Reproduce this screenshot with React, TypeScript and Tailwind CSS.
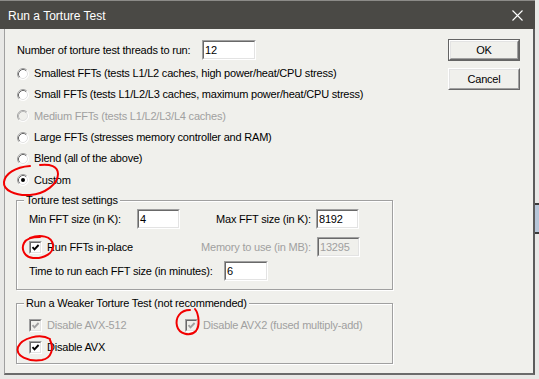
import type { ReactNode } from "react";

const BODY = "#f0f0ec";

function Radio({ checked, disabled }: { checked?: boolean; disabled?: boolean }) {
  return (
    <svg width="12" height="12" viewBox="0 0 12 12" className="shrink-0">
      <circle cx="6" cy="6" r="5.5" fill={disabled ? BODY : "#fff"} />
      <path d="M2.11 9.89 A5.5 5.5 0 0 1 9.89 2.11" stroke="#a0a0a0" fill="none" />
      <path d="M9.89 2.11 A5.5 5.5 0 0 1 2.11 9.89" stroke="#fff" fill="none" />
      <path d="M2.82 9.18 A4.5 4.5 0 0 1 9.18 2.82" stroke={disabled ? "#b8b8b8" : "#696969"} fill="none" />
      <path d="M9.18 2.82 A4.5 4.5 0 0 1 2.82 9.18" stroke="#e3e3e3" fill="none" />
      {checked && <circle cx="6" cy="6" r="2" fill="#000" />}
    </svg>
  );
}

function Check({ checked, disabled }: { checked?: boolean; disabled?: boolean }) {
  return (
    <span className="flex h-[13px] w-[13px] shrink-0 border border-t-[#a0a0a0] border-l-[#a0a0a0] border-b-white border-r-white">
      <span
        className={`flex h-full w-full items-center justify-center border border-t-[#696969] border-l-[#696969] border-b-[#e3e3e3] border-r-[#e3e3e3] ${
          disabled ? "bg-[#f0f0ec]" : "bg-white"
        }`}
      >
        {checked && (
          <svg width="9" height="9" viewBox="0 0 9 9">
            <path d="M1.5 4.2 L3.5 6.3 L7.6 2" stroke={disabled ? "#a0a0a0" : "#000"} strokeWidth="1.9" fill="none" />
          </svg>
        )}
      </span>
    </span>
  );
}

function Field({ value, disabled, className }: { value: string; disabled?: boolean; className: string }) {
  return (
    <div className={`flex h-[20px] shrink-0 border border-t-[#a0a0a0] border-l-[#a0a0a0] border-b-white border-r-white ${className}`}>
      <div
        className={`flex h-full w-full items-center border border-t-[#696969] border-l-[#696969] border-b-[#e3e3e3] border-r-[#e3e3e3] pl-[1px] ${
          disabled ? "bg-[#f0f0ec] text-[#a0a0a0]" : "bg-white text-black"
        }`}
      >
        {value}
      </div>
    </div>
  );
}

function Button({ label, primary }: { label: string; primary?: boolean }) {
  return (
    <div className={`h-[22px] w-[72px] ${primary ? "border border-[#646464]" : ""}`}>
      <div className="h-full w-full border border-t-white border-l-white border-b-[#696969] border-r-[#696969]">
        <div className="flex h-full w-full items-center justify-center border border-t-[#e3e3e3] border-l-[#e3e3e3] border-b-[#a0a0a0] border-r-[#a0a0a0]">
          {label}
        </div>
      </div>
    </div>
  );
}

function RadioRow({ label, h, checked, disabled }: { label: string; h: string; checked?: boolean; disabled?: boolean }) {
  return (
    <div className={`flex items-center ${h}`}>
      <Radio checked={checked} disabled={disabled} />
      <span className={`ml-[5px] ${disabled ? "text-[#a0a0a0]" : ""}`}>{label}</span>
    </div>
  );
}

function Group({ title, className, children }: { title: string; className: string; children: ReactNode }) {
  return (
    <fieldset className={`ml-[-1px] w-[377px] border border-[#a0a0a0] shadow-[inset_1px_1px_0_#fff,1px_1px_0_#fff] ${className}`}>
      <legend className="ml-[7px] bg-[#f0f0ec] px-[2px] leading-[14px]">{title}</legend>
      <div className="pl-[12px]">{children}</div>
    </fieldset>
  );
}

export default function App() {
  return (
    <div className="relative flex h-[379px] w-[539px] overflow-hidden bg-[#e8e8e6] font-['Liberation_Sans',Arial,sans-serif] text-[11px] leading-[13px] text-black">
      <div className="flex h-[375px] w-[535px] flex-col">
        <div className="flex h-[29px] items-center justify-between border-t border-[#8c8b88] bg-[#4a4945] pl-[8px] pr-[12px] text-[12px] text-white">
          <span className="pt-[2px]">Run a Torture Test</span>
          <svg width="11" height="11" viewBox="0 0 11 11">
            <path d="M0.5 0.5 L10.5 10.5 M10.5 0.5 L0.5 10.5" stroke="#fff" strokeWidth="1.1" />
          </svg>
        </div>
        <div className="ml-[4px] flex h-[346px] border-b-2 border-l border-r-2 border-b-[#6b6b6b] border-l-[#a0a0a0] border-r-[#5c5c5c] bg-[#f0f0ec] tracking-[-0.2px]">
          <div className="w-[443px] pl-[12px] pt-[11px]">
            <div className="flex h-[20px] items-center">
              <span className="w-[185px]">Number of torture test threads to run:</span>
              <Field value="12" className="w-[54px]" />
            </div>
            <div className="mt-[3px]">
              <RadioRow h="h-[21px]" label="Smallest FFTs (tests L1/L2 caches, high power/heat/CPU stress)" />
              <RadioRow h="h-[21px]" label="Small FFTs (tests L1/L2/L3 caches, maximum power/heat/CPU stress)" />
              <RadioRow h="h-[22px]" disabled label="Medium FFTs (tests L1/L2/L3/L4 caches)" />
              <RadioRow h="h-[21px]" label="Large FFTs (stresses memory controller and RAM)" />
              <RadioRow h="h-[21px]" label="Blend (all of the above)" />
              <RadioRow h="h-[22px]" checked label="Custom" />
            </div>
            <Group title="Torture test settings" className="mt-[2px] h-[97px]">
              <div className="mt-[2px] flex h-[20px] items-center">
                <span className="w-[108px]">Min FFT size (in K):</span>
                <Field value="4" className="w-[43px]" />
                <span className="ml-[36px] w-[100px]">Max FFT size (in K):</span>
                <Field value="8192" className="w-[43px]" />
              </div>
              <div className="mt-[8px] flex h-[20px] items-center">
                <Check checked />
                <span className="ml-[5px] w-[154px]">Run FFTs in-place</span>
                <span className="w-[116px] text-[#a0a0a0]">Memory to use (in MB):</span>
                <Field value="13295" disabled className="w-[43px]" />
              </div>
              <div className="mt-[4px] flex h-[20px] items-center">
                <span className="w-[195px]">Time to run each FFT size (in minutes):</span>
                <Field value="6" className="w-[44px]" />
              </div>
            </Group>
            <Group title="Run a Weaker Torture Test (not recommended)" className="mt-[6px] h-[68px]">
              <div className="mt-[7px] flex h-[16px] items-center">
                <div className="flex w-[156px] items-center">
                  <Check checked disabled />
                  <span className="ml-[5px] text-[#a0a0a0]">Disable AVX-512</span>
                </div>
                <Check checked disabled />
                <span className="ml-[5px] text-[#a0a0a0]">Disable AVX2 (fused multiply-add)</span>
              </div>
              <div className="mt-[6px] flex h-[16px] items-center">
                <Check checked />
                <span className="ml-[5px]">Disable AVX</span>
              </div>
            </Group>
          </div>
          <div className="flex flex-col gap-[7px] pt-[10px]">
            <Button label="OK" primary />
            <Button label="Cancel" />
          </div>
        </div>
      </div>
      <div className="flex w-[4px] flex-col">
        <div className="h-[203px]" />
        <div className="h-[31px] border-y-2 border-[#3c3c3c] bg-[#b7c6d8]" />
      </div>

      <svg className="pointer-events-none absolute inset-0" width="539" height="379" viewBox="0 0 539 379">
        <g stroke="#f20000" strokeWidth="2" fill="none" strokeLinecap="round">
          <path d="M40 165 C50 164 58 166 58 174 C58 184 45 194 30 195 C15 196 3 190 4 182 C5 174 15 167 30 166" />
          <path d="M30 238 C40 234 52 236 53 245 C54 253 44 259 33 258 C24 257 21 249 24 243 C26 239 32 237 40 237" />
          <path d="M190 310 C180 310 175 318 177 326 C179 334 190 337 196 331 C200 326 199 314 195 309" />
          <path d="M50 339 C40 333 22 338 18 347 C15 356 28 362 42 360 C52 358 54 348 50 340" />
        </g>
      </svg>
    </div>
  );
}
